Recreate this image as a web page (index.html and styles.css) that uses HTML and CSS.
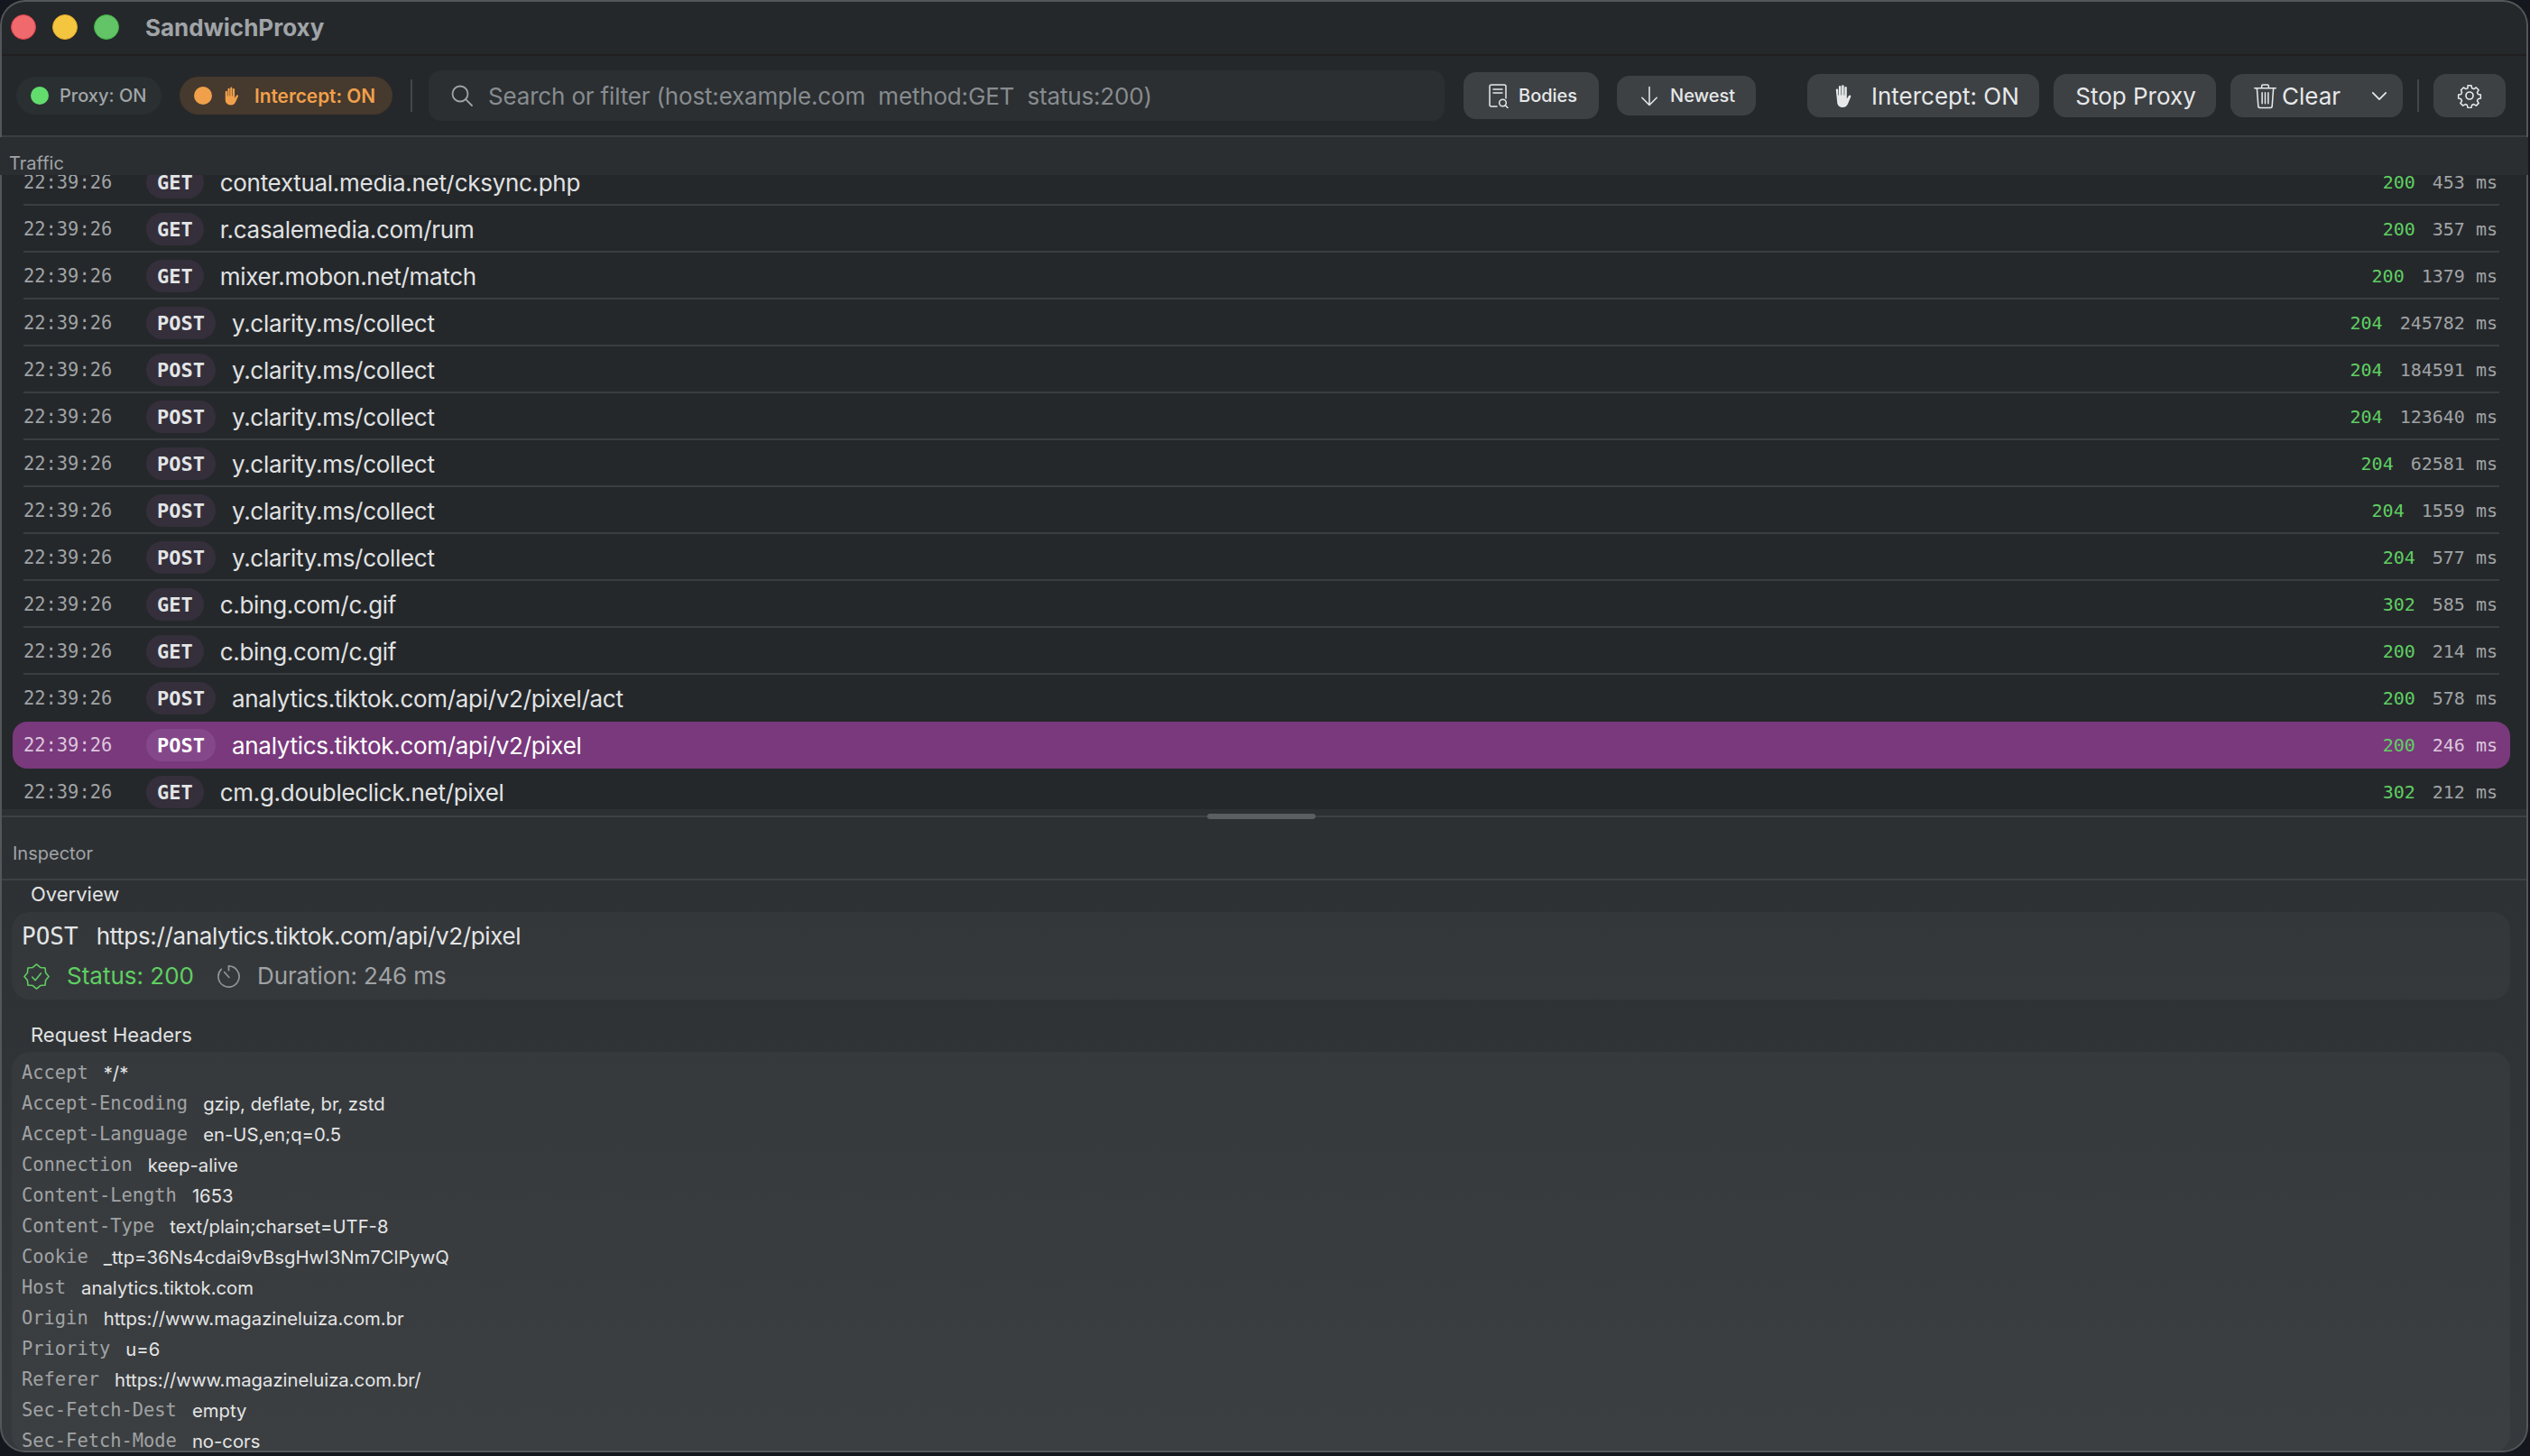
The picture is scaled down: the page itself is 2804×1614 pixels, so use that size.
FILE: index.html
```html
<!DOCTYPE html>
<html lang="en">
<head>
<meta charset="utf-8">
<title>SandwichProxy</title>
<link rel="stylesheet" href="styles.css">
</head>
<body>
<div class="window">
  <header class="titlebar">
    <div class="lights"><i class="light red"></i><i class="light yellow"></i><i class="light green"></i></div>
    <span class="app-title">SandwichProxy</span>
  </header>
  <div class="toolbar">
    <div class="pill pill-proxy"><i class="dot dot-green"></i><span>Proxy: ON</span></div>
    <div class="pill pill-intercept"><i class="dot dot-orange"></i>
      <svg class="ico-hand-s" viewBox="0 0 22 24"><path fill="currentColor" d="M3 7a1.200 1.200 0 0 1 2.400 0v5h.6V3.500a1.200 1.200 0 0 1 2.400 0V12H9V2.200a1.200 1.200 0 0 1 2.400 0V12h.6V3.800a1.200 1.200 0 0 1 2.400 0v10.700l1.700-2.800c.6-1 1.600-1.200 2.200-.8.600.4.500 1.200.1 2l-2.700 6c-1 2.500-3 4.100-5.900 4.100-4 0-6.800-2.500-6.800-6.500z"/></svg>
      <span>Intercept: ON</span></div>
    <i class="vsep"></i>
    <div class="search">
      <svg class="ico-search" viewBox="0 0 26 26" fill="none" stroke="currentColor" stroke-width="1.800" stroke-linecap="round"><circle cx="11" cy="11" r="8.500"/><path d="M17.200 17.200 24 24"/></svg>
      <span>Search or filter (host:example.com&nbsp; method:GET&nbsp; status:200)</span>
    </div>
    <button class="btn btn-small btn-bodies">
      <svg class="ico-bodies" viewBox="0 0 24 28" fill="none" stroke="currentColor" stroke-width="1.500" stroke-linecap="round"><path d="M11 26H5a2 2 0 0 1-2-2V4a2 2 0 0 1 2-2h14a2 2 0 0 1 2 2v13"/><path d="M7 7h10M7 11h10"/><circle cx="17.500" cy="22" r="3.800"/><path d="m20.300 24.800 2.700 2.700"/></svg>
      <span>Bodies</span></button>
    <button class="btn btn-small btn-newest">
      <svg class="ico-arrow" viewBox="0 0 22 26" fill="none" stroke="currentColor" stroke-width="1.700" stroke-linecap="round" stroke-linejoin="round"><path d="M11 2v22M2 15l9 9 9-9"/></svg>
      <span>Newest</span></button>
    <button class="btn btn-large btn-int">
      <svg class="ico-hand" viewBox="0 0 22 28"><path fill="currentColor" d="M3.500 7a1.300 1.300 0 0 1 2.600 0v6h.7V3.500a1.300 1.300 0 0 1 2.600 0V13h.7V2.500a1.300 1.300 0 0 1 2.600 0V13h.7V4.500a1.300 1.300 0 0 1 2.600 0V17l1.800-2.800c.7-1.100 1.700-1.400 2.400-1 .6.400.6 1.300.1 2.300l-2.800 6.700c-1.200 3-3.300 4.800-6.300 4.800-4 0-6.300-2.800-6.300-6.800z"/></svg>
      <span>Intercept: ON</span></button>
    <button class="btn btn-large btn-stop"><span>Stop Proxy</span></button>
    <button class="btn btn-large btn-clear">
      <svg class="ico-trash" viewBox="0 0 26 30" fill="none" stroke="currentColor" stroke-width="1.600" stroke-linecap="round" stroke-linejoin="round"><path d="M.8 6h24.400M9 6V3.500A1.500 1.500 0 0 1 10.500 2h5A1.500 1.500 0 0 1 17 3.500V6M3.500 6 5 26.500a2 2 0 0 0 2 2h12a2 2 0 0 0 2-2L22.500 6M9.500 11v12.500M13 11v12.500M16.500 11v12.500"/></svg>
      <span>Clear</span>
      <svg class="ico-chev" viewBox="0 0 20 12" fill="none" stroke="currentColor" stroke-width="2" stroke-linecap="round" stroke-linejoin="round"><path d="m2 2 8 8 8-8"/></svg>
    </button>
    <i class="vsep vsep-right"></i>
    <button class="btn btn-large btn-gear" aria-label="Settings">
      <svg class="ico-gear" viewBox="0 0 28 28" fill="none" stroke="currentColor" stroke-width="1.700" stroke-linejoin="round"><circle cx="14" cy="14" r="4"/><path d="M11.800 1.500h4.400l.7 3.300 2.300 1 2.900-1.800 3.100 3.100-1.800 2.900 1 2.300 3.300.7v4.400l-3.300.7-1 2.300 1.800 2.900-3.100 3.100-2.900-1.800-2.300 1-.7 3.300h-4.400l-.7-3.300-2.300-1-2.900 1.800-3.100-3.100 1.800-2.900-1-2.300-3.300-.7v-4.400l3.300-.7 1-2.300L3.500 7.100l3.100-3.100 2.900 1.800 2.300-1z" transform="translate(1.400 1.400) scale(.9)"/></svg>
    </button>
  </div>

  <section class="traffic">
    <div class="traffic-head"><span>Traffic</span></div>
    <div class="rows">
      <div class="row"><span class="time">22:39:26</span><span class="method">GET</span><span class="url">contextual.media.net/cksync.php</span><span class="code">200</span><span class="dur">453 ms</span></div>
      <div class="row"><span class="time">22:39:26</span><span class="method">GET</span><span class="url">r.casalemedia.com/rum</span><span class="code">200</span><span class="dur">357 ms</span></div>
      <div class="row"><span class="time">22:39:26</span><span class="method">GET</span><span class="url">mixer.mobon.net/match</span><span class="code">200</span><span class="dur">1379 ms</span></div>
      <div class="row"><span class="time">22:39:26</span><span class="method">POST</span><span class="url">y.clarity.ms/collect</span><span class="code">204</span><span class="dur">245782 ms</span></div>
      <div class="row"><span class="time">22:39:26</span><span class="method">POST</span><span class="url">y.clarity.ms/collect</span><span class="code">204</span><span class="dur">184591 ms</span></div>
      <div class="row"><span class="time">22:39:26</span><span class="method">POST</span><span class="url">y.clarity.ms/collect</span><span class="code">204</span><span class="dur">123640 ms</span></div>
      <div class="row"><span class="time">22:39:26</span><span class="method">POST</span><span class="url">y.clarity.ms/collect</span><span class="code">204</span><span class="dur">62581 ms</span></div>
      <div class="row"><span class="time">22:39:26</span><span class="method">POST</span><span class="url">y.clarity.ms/collect</span><span class="code">204</span><span class="dur">1559 ms</span></div>
      <div class="row"><span class="time">22:39:26</span><span class="method">POST</span><span class="url">y.clarity.ms/collect</span><span class="code">204</span><span class="dur">577 ms</span></div>
      <div class="row"><span class="time">22:39:26</span><span class="method">GET</span><span class="url">c.bing.com/c.gif</span><span class="code">302</span><span class="dur">585 ms</span></div>
      <div class="row"><span class="time">22:39:26</span><span class="method">GET</span><span class="url">c.bing.com/c.gif</span><span class="code">200</span><span class="dur">214 ms</span></div>
      <div class="row row-nosep"><span class="time">22:39:26</span><span class="method">POST</span><span class="url">analytics.tiktok.com/api/v2/pixel/act</span><span class="code">200</span><span class="dur">578 ms</span></div>
      <div class="row row-selected"><span class="time">22:39:26</span><span class="method">POST</span><span class="url">analytics.tiktok.com/api/v2/pixel</span><span class="code">200</span><span class="dur">246 ms</span></div>
      <div class="row row-nosep"><span class="time">22:39:26</span><span class="method">GET</span><span class="url">cm.g.doubleclick.net/pixel</span><span class="code">302</span><span class="dur">212 ms</span></div>
    </div>
  </section>

  <div class="divider"><i class="handle"></i></div>

  <section class="inspector">
    <div class="inspector-head"><span>Inspector</span></div>
    <h3 class="group-title group-overview">Overview</h3>
    <div class="card card-overview">
      <div class="ov-line"><span class="ov-method">POST</span><span class="ov-url">https://analytics.tiktok.com/api/v2/pixel</span></div>
      <div class="ov-status">
        <svg class="ico-badge" viewBox="0 0 30 30" fill="none" stroke="currentColor" stroke-width="1.600" stroke-linejoin="round" stroke-linecap="round"><path d="M15 1 19.300 4.600 24.900 5.100 25.400 10.700 29 15 25.400 19.300 24.900 24.900 19.300 25.400 15 29 10.700 25.400 5.100 24.900 4.600 19.300 1 15 4.600 10.700 5.100 5.100 10.700 4.600Z"/><path d="m10 15.500 3.500 3.800 6.500-8"/></svg>
        <span class="status-text">Status: 200</span>
        <svg class="ico-timer" viewBox="0 0 28 28" fill="none" stroke="currentColor" stroke-width="1.800" stroke-linecap="round"><path d="M14 2a12 12 0 1 1-8.500 3.500"/><path d="M14 2v5M9 9l5.500 6"/></svg>
        <span class="dur-text">Duration: 246 ms</span>
      </div>
    </div>
    <h3 class="group-title group-headers">Request Headers</h3>
    <div class="card card-headers">
      <div class="hdr"><span class="hk">Accept</span><span class="hv">*/*</span></div>
      <div class="hdr"><span class="hk">Accept-Encoding</span><span class="hv">gzip, deflate, br, zstd</span></div>
      <div class="hdr"><span class="hk">Accept-Language</span><span class="hv">en-US,en;q=0.5</span></div>
      <div class="hdr"><span class="hk">Connection</span><span class="hv">keep-alive</span></div>
      <div class="hdr"><span class="hk">Content-Length</span><span class="hv">1653</span></div>
      <div class="hdr"><span class="hk">Content-Type</span><span class="hv">text/plain;charset=UTF-8</span></div>
      <div class="hdr"><span class="hk">Cookie</span><span class="hv">_ttp=36Ns4cdai9vBsgHwI3Nm7ClPywQ</span></div>
      <div class="hdr"><span class="hk">Host</span><span class="hv">analytics.tiktok.com</span></div>
      <div class="hdr"><span class="hk">Origin</span><span class="hv">https://www.magazineluiza.com.br</span></div>
      <div class="hdr"><span class="hk">Priority</span><span class="hv">u=6</span></div>
      <div class="hdr"><span class="hk">Referer</span><span class="hv">https://www.magazineluiza.com.br/</span></div>
      <div class="hdr"><span class="hk">Sec-Fetch-Dest</span><span class="hv">empty</span></div>
      <div class="hdr"><span class="hk">Sec-Fetch-Mode</span><span class="hv">no-cors</span></div>
    </div>
  </section>
</div>
</body>
</html>
```
FILE: styles.css
```css
* { box-sizing: border-box; }
html, body { margin: 0; padding: 0; }
body {
  width: 2804px;
  height: 1614px;
  overflow: hidden;
  background: #14171d;
  font-family: "Inter", "Liberation Sans", sans-serif;
}
i { display: block; font-style: normal; }
button { font-family: inherit; border: 0; padding: 0; margin: 0; }
h3 { margin: 0; font-weight: 400; }

.window {
  width: 2802px;
  height: 1610px;
  border-radius: 28px;
  overflow: hidden;
  background: #2e3134;
  display: flex;
  flex-direction: column;
  position: relative;
}
.window::after {
  content: "";
  position: absolute;
  inset: 0;
  border-radius: 28px;
  border: 2px solid #54575a;
  pointer-events: none;
}

.titlebar {
  height: 62px;
  flex: none;
  display: flex;
  align-items: center;
  padding-left: 12px;
  background: #25282b;
  border-bottom: 2px solid #211f1f;
}
.lights { display: flex; gap: 18px; }
.light { width: 28px; height: 28px; border-radius: 50%; border: 1.500px solid; }
.light.red { background: #f0696d; border-color: #d8424a; }
.light.yellow { background: #f4c63f; border-color: #e3a92c; }
.light.green { background: #62c466; border-color: #40b045; }
.app-title {
  margin-left: 29px;
  font-size: 26px;
  font-weight: 700;
  color: #a0a4a7;
}

.toolbar {
  height: 90px;
  flex: none;
  display: flex;
  align-items: center;
  background: #25282b;
  border-bottom: 2px solid #3b3e41;
  padding-left: 18px;
}
.pill {
  height: 42px;
  border-radius: 21px;
  display: flex;
  align-items: center;
  font-size: 20px;
  font-weight: 500;
}
.pill-proxy { width: 161px; background: #2a2f31; color: #a2a6a9; padding-left: 16px; }
.pill-proxy span { margin-left: 12px; }
.pill-intercept { width: 236px; margin-left: 20px; background: #46392d; color: #f0a04b; padding-left: 16px; font-weight: 600; font-size: 20.800px; }
.dot { width: 20px; height: 20px; border-radius: 50%; flex: none; }
.dot-green { background: #63dc6e; }
.dot-orange { background: #f0a04b; }
.ico-hand-s { width: 20px; height: 23px; margin-left: 12px; }
.pill-intercept span { margin-left: 15px; }
.vsep { width: 2px; height: 36px; background: #43464a; flex: none; }
.toolbar > .vsep { margin-left: 20px; }
.search {
  width: 1126px;
  height: 56px;
  margin-left: 18px;
  border-radius: 14px;
  background: #2b2f32;
  display: flex;
  align-items: center;
  padding-left: 24px;
  color: #888c8f;
  font-size: 26px;
  letter-spacing: -.170px;
}
.ico-search { width: 26px; height: 26px; flex: none; color: #a0a4a7; }
.search span { margin-left: 16px; white-space: nowrap; }
.btn {
  display: flex;
  align-items: center;
  background: #3e4144;
  color: #e6e8e9;
  flex: none;
}
.btn-small { font-size: 20px; font-weight: 500; border-radius: 14px; }
.btn-large { font-size: 26px; height: 48px; border-radius: 14px; }
.btn-bodies { width: 150px; height: 52px; margin-left: 21px; padding-left: 26px; }
.ico-bodies { width: 24px; height: 28px; }
.btn-bodies span { margin-left: 11px; }
.btn-newest { width: 154px; height: 44px; margin-left: 20px; padding-left: 26px; }
.ico-arrow { width: 20px; height: 25px; }
.btn-newest span { margin-left: 13px; }
.btn-int { width: 257px; margin-left: 57px; padding-left: 28px; }
.ico-hand { width: 22px; height: 27px; }
.btn-int span { margin-left: 21px; }
.btn-stop { width: 180px; margin-left: 16px; justify-content: center; padding-left: 2px; }
.btn-clear { width: 191px; margin-left: 16px; padding-left: 26px; }
.ico-trash { width: 25px; height: 29px; }
.btn-clear span { margin-left: 6px; }
.ico-chev { width: 18px; height: 11px; margin-left: 34px; }
.toolbar > .vsep-right { margin-left: 16px; }
.btn-gear { width: 80px; margin-left: 16px; justify-content: center; }
.ico-gear { width: 28px; height: 28px; }

.traffic {
  flex: none;
  height: 745px;
  background: #25282b;
  display: flex;
  flex-direction: column;
  overflow: hidden;
}
.traffic-head {
  height: 42px;
  flex: none;
  background: #2b2e31;
  padding: 17px 0 0 10px;
  color: #a0a4a7;
  font-size: 20px;
  line-height: 24px;
  position: relative;
  z-index: 1;
}
.traffic-head span { display: block; }
.rows {
  flex: 1;
  min-height: 0;
  display: flex;
  flex-direction: column;
  padding: 0 20px 0 14px;
  margin-top: -18px;
}
.row {
  height: 52px;
  flex: none;
  display: flex;
  align-items: center;
  padding: 0 14px 0 12px;
  position: relative;
  font-size: 26px;
  letter-spacing: -.300px;
  color: #e0e2e3;
}
.row::after {
  content: "";
  position: absolute;
  left: 12px;
  right: 12px;
  bottom: 0;
  height: 2px;
  background: #3b3e41;
}
.row-nosep::after, .row-selected::after { display: none; }
.time {
  width: 136px;
  flex: none;
  font-family: "DejaVu Sans Mono", monospace;
  font-size: 20.400px;
  letter-spacing: 0;
  color: #a0a3a5;
}
.method {
  flex: none;
  height: 36px;
  padding: 0 12px;
  border-radius: 18px;
  background: #342f3b;
  color: #e3e5e6;
  font-weight: 700;
  font-size: 22px;
  font-family: "DejaVu Sans Mono", monospace;
  letter-spacing: 0;
  display: flex;
  align-items: center;
  margin-right: 18px;
}
.url { flex: 1; min-width: 0; white-space: nowrap; }
.code {
  flex: none;
  font-family: "DejaVu Sans Mono", monospace;
  font-size: 20px;
  letter-spacing: 0;
  color: #5fcf62;
}
.dur {
  flex: none;
  margin-left: 19px;
  font-family: "DejaVu Sans Mono", monospace;
  font-size: 20px;
  letter-spacing: 0;
  color: #a0a3a5;
}
.row-selected { background: #79397c; border-radius: 16px; color: #fff; }
.row-selected .time, .row-selected .dur { color: #dcc6dd; }
.row-selected .method { background: #84488a; color: #fff; }

.divider {
  flex: none;
  height: 16px;
  display: flex;
  justify-content: center;
  align-items: flex-end;
  padding-right: 6px;
  background: linear-gradient(#2d3033 7px, #3e4144 7px, #3e4144 9px, #2d3033 9px);
}
.handle { width: 120px; height: 6px; border-radius: 3px; background: #5c5f62; margin-bottom: 5px; }

.inspector {
  flex: 1;
  min-height: 0;
  display: flex;
  flex-direction: column;
  padding: 0 20px 0 13px;
  overflow: hidden;
  background: linear-gradient(#2d3033, #36393b);
}
.inspector-head {
  flex: none;
  height: 63px;
  margin: 0 -20px 0 -13px;
  padding: 21px 0 0 14px;
  border-bottom: 2px solid #3e4144;
  color: #a0a4a7;
  font-size: 20px;
  line-height: 24px;
}
.group-title { font-size: 22px; line-height: 28px; color: #e0e2e3; padding-left: 21px; flex: none; }
.group-overview { margin-top: 1px; }
.group-headers { margin-top: 25px; }
.card { background: rgba(255, 255, 255, .03); border-radius: 20px; }
.card-overview { flex: none; height: 97px; margin-top: 6px; padding: 9px 11px 0; }
.ov-line { display: flex; align-items: center; gap: 20px; line-height: 36px; color: #e3e5e6; }
.ov-method { font-family: "DejaVu Sans Mono", monospace; font-size: 26px; }
.ov-url { font-size: 26px; letter-spacing: -.350px; }
.ov-status { display: flex; align-items: center; margin-top: 8px; font-size: 26px; line-height: 36px; }
.ico-badge { width: 29px; height: 29px; color: #5fcf62; flex: none; margin-left: 2px; }
.status-text { color: #5fcf62; margin-left: 19px; }
.ico-timer { width: 27px; height: 27px; color: #8f9295; flex: none; margin-left: 25px; }
.dur-text { color: #a0a3a5; margin-left: 18px; letter-spacing: -.100px; }
.card-headers {
  flex: 1;
  min-height: 0;
  margin-top: 5px;
  padding: 12px 11px 0;
  display: flex;
  flex-direction: column;
  gap: 11px;
}
.hdr { height: 23px; line-height: 23px; flex: none; display: flex; align-items: center; gap: 17px; font-size: 20.300px; color: #e3e5e6; white-space: nowrap; }
.hk { font-family: "DejaVu Sans Mono", monospace; font-size: 20.400px; color: #a0a3a5; }
```
